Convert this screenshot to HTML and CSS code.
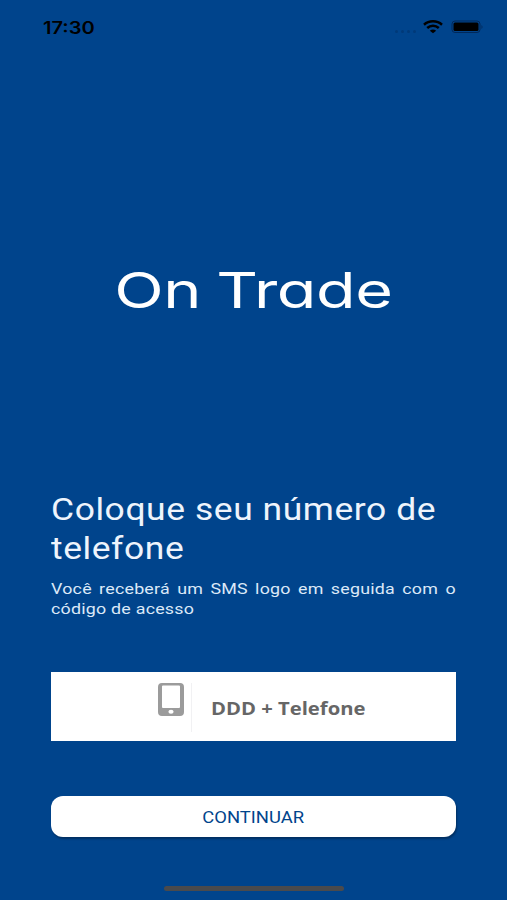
FILE: index.html
```
<!DOCTYPE html>
<html lang="pt-BR">
<head>
  <meta charset="UTF-8" />
  <meta name="viewport" content="width=device-width, initial-scale=1.0"/>
  <title>On Trade</title>
  <link rel="stylesheet" href="styles.css">
</head>
<body>
  <div class="screen">
    <header class="status-bar">
      <span class="time">17:30</span>
      <div class="status-icons">
        <span class="signal"><i></i><i></i><i></i><i></i></span>
        <svg class="wifi" width="20" height="14" viewBox="0 0 20 14">
          <path d="M1 4.700C6 .2 14 .2 19 4.700M4.200 8C7.500 5 12.500 5 15.800 8" fill="none" stroke="#000" stroke-width="2.500"/>
          <path d="M6.800 10.700Q10 8.200 13.200 10.700L10 13.200Z"/>
        </svg>
        <svg class="battery" width="33" height="14" viewBox="0 0 33 14">
          <rect x="1" y="1" width="28" height="11.500" rx="3" fill="none" stroke="#00285a" stroke-width="1"/>
          <rect x="2.500" y="2.500" width="25" height="8.500" rx="1.500"/>
          <path d="M30.500 5v4q2-2 0-4" fill="#00285a"/>
        </svg>
      </div>
    </header>

    <div class="logo"><span>On Trade</span></div>

    <form class="phone-form">
      <h1>Coloque seu número de telefone</h1>
      <p class="hint">Você receberá um SMS logo em seguida com o código de acesso</p>
      <label class="field">
        <svg class="phone" width="26" height="33" viewBox="0 0 26 33">
          <path fill="#9b9b9b" fill-rule="evenodd" d="M4 0h18q4 0 4 4v25q0 4-4 4H4q-4 0-4-4V4q0-4 4-4zM5 2.500q-1 0-1 1V24q0 1 1 1h16q1 0 1-1V3.500q0-1-1-1z"/>
          <ellipse cx="13" cy="28.800" rx="2.600" ry="2" fill="#fff"/>
        </svg>
        <span class="divider"></span>
        <span class="placeholder">DDD + Telefone</span>
      </label>
      <button type="button" class="btn"><span>CONTINUAR</span></button>
    </form>

    <div class="home-bar"></div>
  </div>
</body>
</html>
```
FILE: styles.css
```
body {
  margin: 0;
  background: #00448c;
  font-family: Roboto, sans-serif;
}
.screen {
  display: flex;
  flex-direction: column;
  height: 900px;
  overflow: hidden;
  background: #00448c;
}
.status-bar {
  display: flex;
  justify-content: space-between;
  box-sizing: border-box;
  height: 54px;
  padding: 18px 23px 0 43px;
}
.time {
  font: 600 17px/21px Inter, sans-serif;
  transform: scaleX(1.18);
  transform-origin: left;
}
.status-icons {
  display: flex;
  align-items: flex-start;
  padding-top: 2px;
}
.signal {
  display: flex;
  gap: 3px;
  margin: 10px 7px 0 0;
}
.signal i {
  width: 3px;
  height: 3px;
  border-radius: 50%;
  background: #003a78;
}
.battery {
  margin-left: 8px;
}
.logo {
  display: flex;
  justify-content: center;
  height: 436px;
  padding-top: 207px;
  box-sizing: border-box;
  color: #fff;
  font: 400 49px/60px Inter, sans-serif;
  font-feature-settings: "cv11";
}
.logo span {
  white-space: nowrap;
  letter-spacing: -0.3px;
  word-spacing: -2px;
  transform: scaleX(1.32);
}
.phone-form {
  padding: 0 51px;
}
h1 {
  width: 350px;
  margin: 0 0 12px;
  color: #eef4fc;
  font-size: 31px;
  font-weight: 400;
  line-height: 39px;
  letter-spacing: 0.5px;
  transform: scaleX(1.143);
  transform-origin: left;
}
.hint {
  width: 352px;
  margin: 0 0 53px;
  color: #dce9f8;
  font-size: 15.500px;
  line-height: 19.500px;
  letter-spacing: 0.2px;
  text-align: justify;
  transform: scaleX(1.15);
  transform-origin: left;
}
.field {
  display: flex;
  align-items: flex-start;
  box-sizing: border-box;
  height: 69px;
  padding: 11px 0 0 107px;
  background: #fff;
}
.divider {
  width: 1px;
  height: 49px;
  margin-left: 7px;
  background: #f1f1f3;
}
.placeholder {
  margin: 15px 0 0 19px;
  color: #666;
  font: 700 17px/22px "Open Sans", sans-serif;
  transform: scaleX(1.19);
  transform-origin: left;
}
.btn {
  display: block;
  width: 100%;
  height: 41px;
  margin-top: 55px;
  padding: 0;
  border: none;
  border-radius: 12px;
  background: #fff;
  box-shadow: 1px 2px 2px rgba(0, 0, 0, 0.3);
  color: #00448c;
  font: 400 16px/43px Roboto, sans-serif;
}
.btn span {
  display: inline-block;
  transform: scaleX(1.15);
}
.home-bar {
  width: 180px;
  height: 5px;
  margin: auto auto 9px 164px;
  border-radius: 3px;
  background: #4a4a4c;
}
```
